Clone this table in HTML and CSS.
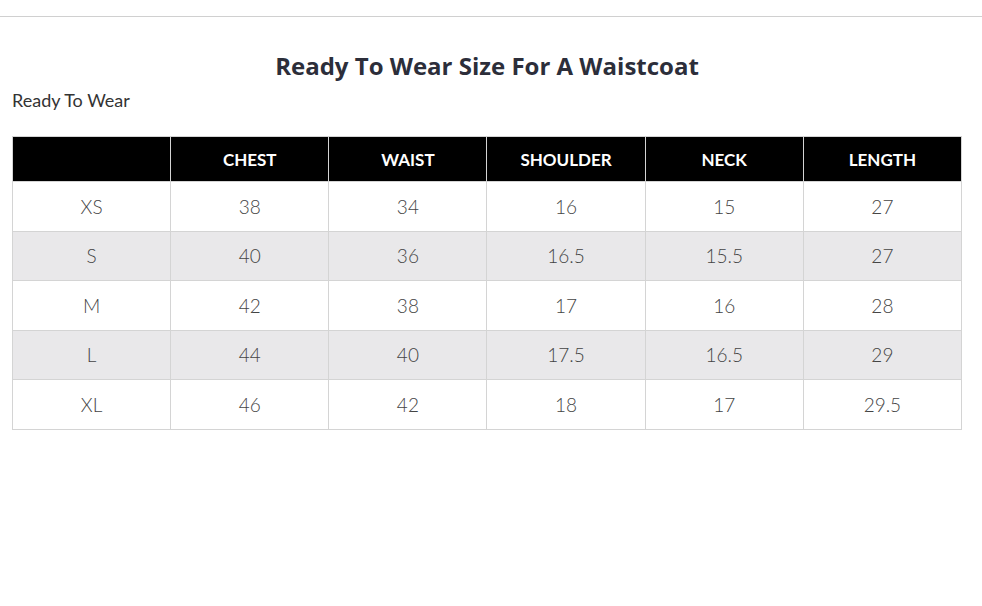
FILE: index.html
```html
<!DOCTYPE html>
<html>
<head>
<meta charset="utf-8">
<link rel="stylesheet" href="styles.css">
</head>
<body>
<div class="topline"></div>
<main class="content">
  <h2 class="title">Ready To Wear Size For A Waistcoat</h2>
  <p class="subtitle">Ready To Wear</p>
  <table class="sizes">
    <thead>
      <tr><th></th><th>CHEST</th><th>WAIST</th><th>SHOULDER</th><th>NECK</th><th>LENGTH</th></tr>
    </thead>
    <tbody>
      <tr><td>XS</td><td>38</td><td>34</td><td>16</td><td>15</td><td>27</td></tr>
      <tr><td>S</td><td>40</td><td>36</td><td>16.5</td><td>15.5</td><td>27</td></tr>
      <tr><td>M</td><td>42</td><td>38</td><td>17</td><td>16</td><td>28</td></tr>
      <tr><td>L</td><td>44</td><td>40</td><td>17.5</td><td>16.5</td><td>29</td></tr>
      <tr><td>XL</td><td>46</td><td>42</td><td>18</td><td>17</td><td>29.5</td></tr>
    </tbody>
  </table>
</main>
</body>
</html>
```
FILE: styles.css
```css
html, body {
  margin: 0;
  padding: 0;
  background: #fff;
}
body {
  font-family: Lato, "Open Sans", sans-serif;
  color: #444;
}
.topline {
  margin-top: 16px;
  height: 1px;
  background: #d0d0d0;
}
.content {
  padding: 0 20px 0 12px;
}
.title {
  margin: 33px 0 0;
  text-align: center;
  font-family: "Open Sans", "Noto Sans", sans-serif;
  font-weight: 700;
  font-size: 24px;
  line-height: 32px;
  color: #2c2e3a;
}
.subtitle {
  margin: 6px 0 0;
  font-size: 18px;
  line-height: 24px;
  color: #333;
}
.sizes {
  margin-top: 24px;
  width: 950px;
  border-collapse: collapse;
  table-layout: fixed;
  border: 1px solid #d4d4d4;
}
.sizes thead tr {
  height: 45px;
}
.sizes tbody tr {
  height: 49.5px;
}
.sizes th {
  background: #000;
  color: #fff;
  font-weight: 700;
  font-size: 17px;
  padding: 0;
  border: 1px solid #d4d4d4;
  text-align: center;
}
.sizes td {
  padding: 0;
  border: 1px solid #d4d4d4;
  text-align: center;
  font-size: 19px;
  font-weight: 300;
  color: #444;
}
.sizes tbody tr:nth-child(even) td {
  background: #e9e8ea;
}
```
